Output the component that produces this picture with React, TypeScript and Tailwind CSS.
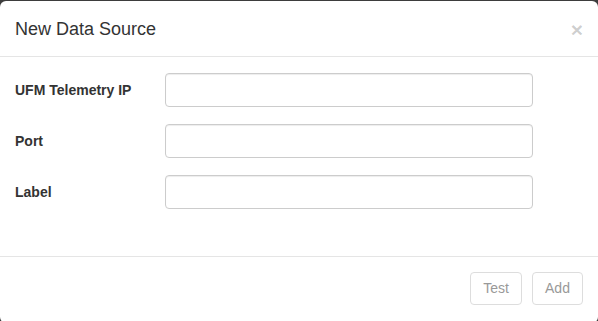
import React from "react";

export default function App() {
  const rows = ["UFM Telemetry IP", "Port", "Label"];
  return (
    <div
      className="w-[598px] h-[321px] bg-[#3d3d3d] pt-px overflow-hidden"
      style={{ fontFamily: '"Liberation Sans", Arial, sans-serif' }}
    >
      <div className="w-[598px] h-[322px] bg-white rounded-[6px] flex flex-col text-[#333]">
        <div className="h-[56px] border-b border-[#e5e5e5] flex items-center justify-between pl-[15px] pr-[15px]">
          <h4 className="text-[18px] leading-[26px] pt-[1px]">New Data Source</h4>
          <span className="text-[21px] font-bold leading-none text-black/20 pt-[1px]">×</span>
        </div>
        <div className="h-[199px] pt-[16px] px-[15px] flex flex-col gap-[17px]">
          {rows.map((r) => (
            <div key={r} className="flex items-center h-[34px]">
              <label className="w-[150px] text-[14px] font-bold pt-[1px]">{r}</label>
              <input
                className="w-[368px] h-[34px] border border-[#ccc] rounded-[4px] px-3 text-[14px] outline-none shadow-[inset_0_1px_1px_rgba(0,0,0,0.075)]"
                type="text"
              />
            </div>
          ))}
        </div>
        <div className="border-t border-[#e5e5e5] pt-[15px] pr-[15px] flex justify-end gap-[10px]">
          <button className="w-[52px] h-[33px] border border-[#ddd] rounded-[4px] text-[14px] text-[#999] bg-white">
            Test
          </button>
          <button className="w-[51px] h-[33px] border border-[#ddd] rounded-[4px] text-[14px] text-[#999] bg-white">
            Add
          </button>
        </div>
      </div>
    </div>
  );
}
